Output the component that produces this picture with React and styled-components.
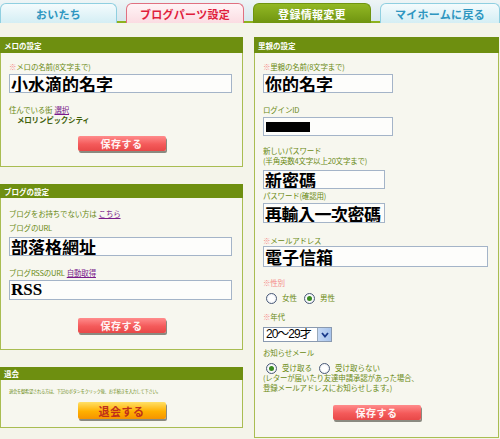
import React from "react";
import styled, { createGlobalStyle } from "styled-components";

const Global = createGlobalStyle`
  html, body { margin: 0; padding: 0; background: #f4f4ea; }
  body { font-family: "Noto Sans CJK JP", "Liberation Sans", sans-serif; width: 500px; height: 439px; overflow: hidden; }
`;

const TabBar = styled.div`
  display: flex;
  gap: 9px;
  height: 23px;
  padding-top: 3px;
  box-sizing: border-box;
  background: linear-gradient(#eef5f6, #d7e7ee);
  border-bottom: 2px solid #8eb21e;
`;

const tabColors = {
  blue: { bg: "linear-gradient(#f4fbfd, #d4eef4)", border: "#8fcfe0", color: "#2e96c0" },
  pink: { bg: "linear-gradient(#fff4f6, #fbdce2)", border: "#e07080", color: "#e01e3c" },
  green: { bg: "linear-gradient(#92b824, #6f9410)", border: "#6f9410", color: "#ffffff" },
};

const Tab = styled.div`
  flex: 0 0 ${(p) => p.$w}px;
  box-sizing: border-box;
  height: 20px;
  border: 1px solid ${(p) => tabColors[p.$kind].border};
  border-bottom: none;
  border-radius: 6px 6px 0 0;
  background: ${(p) => tabColors[p.$kind].bg};
  color: ${(p) => tabColors[p.$kind].color};
  font-size: 11px;
  font-weight: 700;
  display: flex;
  align-items: center;
  justify-content: center;
  letter-spacing: 0.3px;
`;

const Main = styled.div`
  display: grid;
  grid-template-columns: 243px 245px;
  column-gap: 11px;
  padding-top: 14px;
  align-items: start;
`;

const Column = styled.div`
  display: flex;
  flex-direction: column;
  gap: 17px;
`;

const Panel = styled.div`
  border: 1px solid #a9bd52;
  border-top: none;
  background: #f7f7ef;
  padding-bottom: ${(p) => p.$pb || 0}px;
  min-height: ${(p) => p.$minh || 0}px;
  box-sizing: border-box;
`;

const Header = styled.div`
  height: ${(p) => p.$h || 16}px;
  background: #6e8f10;
  color: #fff;
  font-size: 7.5px;
  font-weight: 700;
  display: flex;
  align-items: center;
  padding-left: 4px;
  margin: 0 -1px;
`;

const Body = styled.div`
  padding: 0 8px;
  display: flex;
  flex-direction: column;
  align-items: flex-start;
`;

const Label = styled.div`
  margin-top: ${(p) => p.$mt || 0}px;
  margin-left: ${(p) => p.$ml || 0}px;
  height: 10px;
  font-size: ${(p) => p.$fs || 7.5}px;
  line-height: 10px;
  letter-spacing: -0.2px;
  color: ${(p) => (p.$dark ? "#40600a" : "#6a8a14")};
  font-weight: ${(p) => (p.$bold ? 700 : 400)};
  white-space: nowrap;
`;

const Req = styled.span`
  color: #f58a8a;
`;

const Link = styled.span`
  color: #7a1a8a;
  text-decoration: underline;
  margin-left: 2px;
`;

const Input = styled.input`
  margin-top: ${(p) => p.$mt || 0}px;
  width: ${(p) => p.$w}px;
  height: ${(p) => p.$h || 19}px;
  box-sizing: border-box;
  border: 1px solid #a4b4c8;
  background: #fdfdfb;
  padding: 0 0 0 1px;
  font-family: "Liberation Serif", "Noto Sans CJK TC", serif;
  font-size: 17px;
  font-weight: 700;
  letter-spacing: ${(p) => (p.$tight ? "-0.5px" : "0")};
  color: #000;
  line-height: 17px;
  outline: none;
`;

const IdBox = styled.div`
  margin-top: 2px;
  width: 130px;
  height: 19px;
  box-sizing: border-box;
  border: 1px solid #a4b4c8;
  background: #fdfdfb;
  padding: 4px 2px;
`;

const Redact = styled.div`
  width: 44px;
  height: 10px;
  background: #000;
`;

const BtnRow = styled.div`
  align-self: stretch;
  display: flex;
  justify-content: center;
  margin-top: ${(p) => p.$mt || 0}px;
`;

const Button = styled.div`
  width: 88px;
  height: ${(p) => (p.$orange ? 17 : 15)}px;
  box-sizing: border-box;
  border-radius: 2px;
  background: ${(p) =>
    p.$orange
      ? "linear-gradient(#ffe066, #ffb000 55%, #f59400)"
      : "linear-gradient(#ff8c8c, #f45a5a 55%, #e84848)"};
  box-shadow: 1px 2px 0 #8a8a80;
  color: ${(p) => (p.$orange ? "#c0301a" : "#fff4f4")};
  font-size: ${(p) => (p.$orange ? 11 : 10)}px;
  font-weight: 700;
  display: flex;
  align-items: center;
  justify-content: center;
  letter-spacing: 0.5px;
`;

const RadioRow = styled.div`
  margin-top: ${(p) => p.$mt || 0}px;
  margin-left: 3px;
  height: 10px;
  line-height: 10px;
  display: flex;
  align-items: center;
  gap: 5px;
  font-size: 7.5px;
  color: #6a8a14;
`;

const Radio = styled.span`
  width: 11px;
  height: 11px;
  box-sizing: border-box;
  border-radius: 50%;
  border: 1px solid #4a5a78;
  background: radial-gradient(circle, #fff 40%, #dfe4ec);
  display: inline-flex;
  align-items: center;
  justify-content: center;
  margin-left: ${(p) => p.$ml || 0}px;
  &::after {
    content: "";
    width: 5px;
    height: 5px;
    border-radius: 50%;
    background: ${(p) => (p.$on ? "#3a8a20" : "transparent")};
  }
`;

const Select = styled.div`
  margin-top: 5px;
  width: 69px;
  height: 15px;
  box-sizing: border-box;
  border: 1px solid #8a9ab0;
  background: #fff;
  display: flex;
  font-family: "Liberation Sans", "Noto Sans CJK JP", sans-serif;
  font-size: 12px;
  color: #000;
`;

const SelectText = styled.div`
  flex: 1;
  line-height: 13px;
  padding-left: 2px;
  white-space: nowrap;
  letter-spacing: -1px;
  overflow: hidden;
`;

const SelectArrow = styled.div`
  width: 13px;
  background: linear-gradient(90deg, #c4d8f4, #a8c4ec);
  border-left: 1px solid #9ab;
  display: flex;
  align-items: center;
  justify-content: center;
`;

export default function App() {
  return (
    <>
      <Global />
      <TabBar>
        <Tab $w={117} $kind="blue">おいたち</Tab>
        <Tab $w={118} $kind="pink">ブログパーツ設定</Tab>
        <Tab $w={118} $kind="green">登録情報変更</Tab>
        <Tab $w={120} $kind="blue">マイホームに戻る</Tab>
      </TabBar>
      <Main>
        <Column>
          <Panel $pb={15}>
            <Header>メロの設定</Header>
            <Body>
              <Label $mt={9}><Req>※</Req>メロの名前(8文字まで)</Label>
              <Input $w={223} $mt={2} defaultValue="小水滴的名字" readOnly />
              <Label $mt={12}>住んでいる街<Link>選択</Link></Label>
              <Label $ml={8} $bold $dark>メロリンピックシティ</Label>
              <BtnRow $mt={11}><Button>保存する</Button></BtnRow>
            </Body>
          </Panel>
          <Panel $pb={16}>
            <Header $h={14}>ブログの設定</Header>
            <Body>
              <Label $mt={11}>ブログをお持ちでない方は<Link>こちら</Link></Label>
              <Label $mt={4}>ブログのURL</Label>
              <Input $w={223} $mt={4} defaultValue="部落格網址" readOnly />
              <Label $mt={12}>ブログRSSのURL<Link>自動取得</Link></Label>
              <Input $w={223} $h={20} $mt={2} defaultValue="RSS" readOnly />
              <BtnRow $mt={18}><Button>保存する</Button></BtnRow>
            </Body>
          </Panel>
          <Panel $pb={8}>
            <Header $h={13}>退会</Header>
            <Body>
              <Label $mt={6} $fs={4.2}>
                退会を御希望される方は、下記のボタンをクリック後、お手続きを入力して下さい。
              </Label>
              <BtnRow $mt={6}><Button $orange>退会する</Button></BtnRow>
            </Body>
          </Panel>
        </Column>
        <Panel $minh={401}>
          <Header>里親の設定</Header>
          <Body>
            <Label $mt={9}><Req>※</Req>里親の名前(8文字まで)</Label>
            <Input $w={130} $mt={2} defaultValue="你的名字" readOnly />
            <Label $mt={12}>ログインID</Label>
            <IdBox><Redact /></IdBox>
            <Label $mt={10}>新しいパスワード</Label>
            <Label>(半角英数4文字以上20文字まで)</Label>
            <Input $w={122} $mt={4} defaultValue="新密碼" readOnly />
            <Label $mt={2}>パスワード(確認用)</Label>
            <Input $w={122} $h={20} $mt={2} $tight defaultValue="再輸入一次密碼" readOnly />
            <Label $mt={13}><Req>※</Req>メールアドレス</Label>
            <Input $w={225} $h={21} defaultValue="電子信箱" readOnly />
            <Label $mt={11}><Req>※性別</Req></Label>
            <RadioRow $mt={5}>
              <Radio />女性
              <Radio $on $ml={2} />男性
            </RadioRow>
            <Label $mt={9}><Req>※</Req>年代</Label>
            <Select>
              <SelectText>20〜29才</SelectText>
              <SelectArrow>
                <svg width="8" height="6" viewBox="0 0 8 6">
                  <path d="M1 1 L4 4.5 L7 1" stroke="#1a3a8a" strokeWidth="1.8" fill="none" />
                </svg>
              </SelectArrow>
            </Select>
            <Label $mt={6}>お知らせメール</Label>
            <RadioRow $mt={5}>
              <Radio $on />受け取る
              <Radio $ml={2} />受け取らない
            </RadioRow>
            <Label>(レターが届いたり友達申請承認があった場合、</Label>
            <Label>登録メールアドレスにお知らせします。)</Label>
            <BtnRow $mt={12}><Button>保存する</Button></BtnRow>
          </Body>
        </Panel>
      </Main>
    </>
  );
}
